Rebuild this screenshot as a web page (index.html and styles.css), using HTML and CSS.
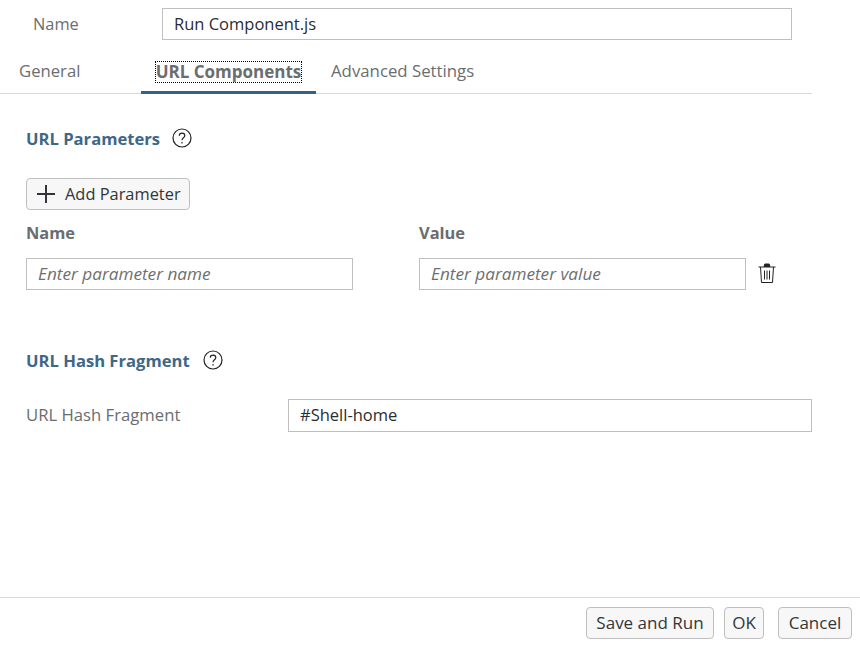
FILE: index.html
```html
<!DOCTYPE html>
<html lang="en">
<head>
    <meta charset="UTF-8">
    <meta name="viewport" content="width=device-width, initial-scale=1.0">
    <title>Run Configuration</title>
    <link rel="stylesheet" href="styles.css">
</head>
<body>
    <div class="dialog">
        <div class="dialog-content">
            <!-- Configuration name -->
            <div class="name-row">
                <label class="name-label">Name</label>
                <input class="text-field name-field" type="text" value="Run Component.js">
            </div>

            <!-- Tabs -->
            <div class="tabs">
                <div class="tab tab-general">General</div>
                <div class="tab tab-active"><span class="tab-focus">URL Components</span></div>
                <div class="tab tab-advanced">Advanced Settings</div>
            </div>

            <!-- URL parameters -->
            <section class="params">
                <div class="section-title">
                    <h2>URL Parameters</h2>
                    <svg class="help-icon help-params" viewBox="0 0 20 20" aria-hidden="true">
                        <circle cx="10" cy="10" r="9" />
                        <path d="M7.3 7.8c0-1.6 1.2-2.7 2.8-2.7s2.7 1 2.7 2.4c0 2.3-2.8 2.3-2.8 4.7" />
                        <path d="M10 14v1.5" />
                    </svg>
                </div>
                <button class="btn add-btn">
                    <svg class="plus-icon" viewBox="0 0 20 20" aria-hidden="true"><path d="M10 1v18M1 10h18" /></svg>
                    <span>Add Parameter</span>
                </button>
                <div class="param-grid">
                    <div class="col-head">Name</div>
                    <div class="col-head">Value</div>
                    <input class="text-field param-field" type="text" placeholder="Enter parameter name">
                    <input class="text-field param-field" type="text" placeholder="Enter parameter value">
                    <svg class="trash-icon" viewBox="0 0 20 22" aria-hidden="true">
                        <path d="M1.5 5h17M3.5 5l1 15.5h11l1-15.5" />
                        <path d="M7.5 8.5v9M10 8.5v9M12.5 8.5v9" />
                        <path class="trash-lid" d="M7 4.5l.8-2.5h4.4l.8 2.500z" />
                    </svg>
                </div>
            </section>

            <!-- URL hash fragment -->
            <section class="hash">
                <div class="section-title">
                    <h2>URL Hash Fragment</h2>
                    <svg class="help-icon" viewBox="0 0 20 20" aria-hidden="true">
                        <circle cx="10" cy="10" r="9" />
                        <path d="M7.3 7.8c0-1.6 1.2-2.7 2.8-2.7s2.7 1 2.7 2.4c0 2.3-2.8 2.3-2.8 4.7" />
                        <path d="M10 14v1.5" />
                    </svg>
                </div>
                <div class="hash-row">
                    <label class="hash-label">URL Hash Fragment</label>
                    <input class="text-field hash-field" type="text" value="#Shell-home">
                </div>
            </section>
        </div>

        <!-- Dialog buttons -->
        <div class="footer">
            <button class="btn save-btn">Save and Run</button>
            <button class="btn ok-btn">OK</button>
            <button class="btn cancel-btn">Cancel</button>
        </div>
    </div>
</body>
</html>
```

FILE: styles.css
```css
/* Dialog shell */
body {
    margin: 0;
    background-color: #fff;
    color: #32363a;
    font-family: "Open Sans", "Liberation Sans", sans-serif;
    font-size: 16.7px;
}

.dialog {
    display: flex;
    flex-direction: column;
    height: 647px;
    overflow: hidden;
}

.dialog-content {
    flex: 1;
    width: 812px;
}

/* Inputs */
.text-field {
    box-sizing: border-box;
    width: 100%;
    height: 32px;
    padding: 0 11px 2px;
    border: 1px solid #bfbfbf;
    background-color: #fff;
    color: #2a2d30;
    font-family: inherit;
    font-size: 16.5px;
}

.text-field::placeholder {
    color: #6f6f6f;
    font-size: 17.2px;
    font-style: italic;
    opacity: 1;
}

/* Name row */
.name-row {
    display: flex;
    align-items: center;
    padding-top: 8px;
}

.name-label {
    width: 129px;
    padding: 0 0 2px 33px;
    color: #6a6d70;
    font-size: 16.4px;
}

.name-field {
    width: 630px;
}

/* Tabs */
.tabs {
    display: flex;
    height: 54px;
    border-bottom: 1px solid #d9d9d9;
    box-sizing: border-box;
}

.tab {
    display: flex;
    align-items: center;
    height: 54px;
    box-sizing: border-box;
    padding-top: 6px;
    color: #6a6d70;
    white-space: nowrap;
}

.tab-general {
    width: 141px;
    padding-left: 19px;
}

.tab-active {
    justify-content: center;
    width: 175px;
    padding-top: 13px;
    border-bottom: 3px solid #346187;
    font-weight: 700;
    font-size: 17px;
}

.tab-focus {
    line-height: 20px;
    outline: 1px dotted #000;
}

.tab-advanced {
    padding-left: 15px;
    font-size: 16.8px;
}

/* Sections */
.section-title {
    display: flex;
    align-items: center;
    gap: 13px;
    height: 24px;
}

.section-title h2 {
    margin: 0;
    padding-bottom: 2px;
    color: #3e6788;
    font-size: 16.6px;
    font-weight: 700;
}

.help-icon {
    width: 20px;
    height: 20px;
    margin-top: -3px;
    fill: none;
    stroke: #222;
    stroke-width: 1.2;
}

.help-params {
    margin-left: -1px;
}

.params {
    padding: 33px 0 0 26px;
}

.hash {
    padding: 59px 0 0 26px;
}

/* Buttons */
.btn {
    box-sizing: border-box;
    height: 32px;
    padding: 0 0 2px;
    border: 1px solid #bfbfbf;
    border-radius: 4px;
    background-color: #f7f7f7;
    color: #32363a;
    font-family: inherit;
    font-size: 17px;
    white-space: nowrap;
}

.add-btn {
    display: flex;
    align-items: center;
    gap: 9px;
    width: 164px;
    margin-top: 27px;
    padding: 0 0 0 9px;
    font-size: 16.4px;
}

.add-btn span {
    padding-bottom: 2px;
}

.plus-icon {
    width: 20px;
    height: 20px;
    fill: none;
    stroke: #32363a;
    stroke-width: 2;
}

/* Parameter table */
.param-grid {
    display: grid;
    grid-template-columns: 393px 338px 20px;
    margin-top: 12px;
}

.col-head {
    grid-row: 1;
    height: 36px;
    box-sizing: border-box;
    line-height: 22px;
    color: #6a6d70;
    font-size: 16.4px;
    font-weight: 700;
}

.param-field {
    grid-row: 2;
    width: 327px;
}

.trash-icon {
    grid-row: 2;
    width: 20px;
    height: 22px;
    margin-top: 4px;
    fill: none;
    stroke: #222;
    stroke-width: 1;
}

.trash-lid {
    fill: #222;
}

/* Hash row */
.hash-row {
    display: flex;
    align-items: center;
    margin-top: 26px;
}

.hash-label {
    width: 262px;
    padding-bottom: 2px;
    color: #6a6d70;
}

.hash-field {
    width: 524px;
    height: 33px;
}

/* Footer */
.footer {
    display: flex;
    justify-content: flex-end;
    gap: 10px;
    height: 50px;
    padding: 9px 8px 0 0;
    border-top: 1px solid #d9d9d9;
    box-sizing: border-box;
}

.save-btn {
    width: 128px;
}

.ok-btn {
    width: 40px;
    margin-right: 4px;
}

.cancel-btn {
    width: 74px;
}
```
